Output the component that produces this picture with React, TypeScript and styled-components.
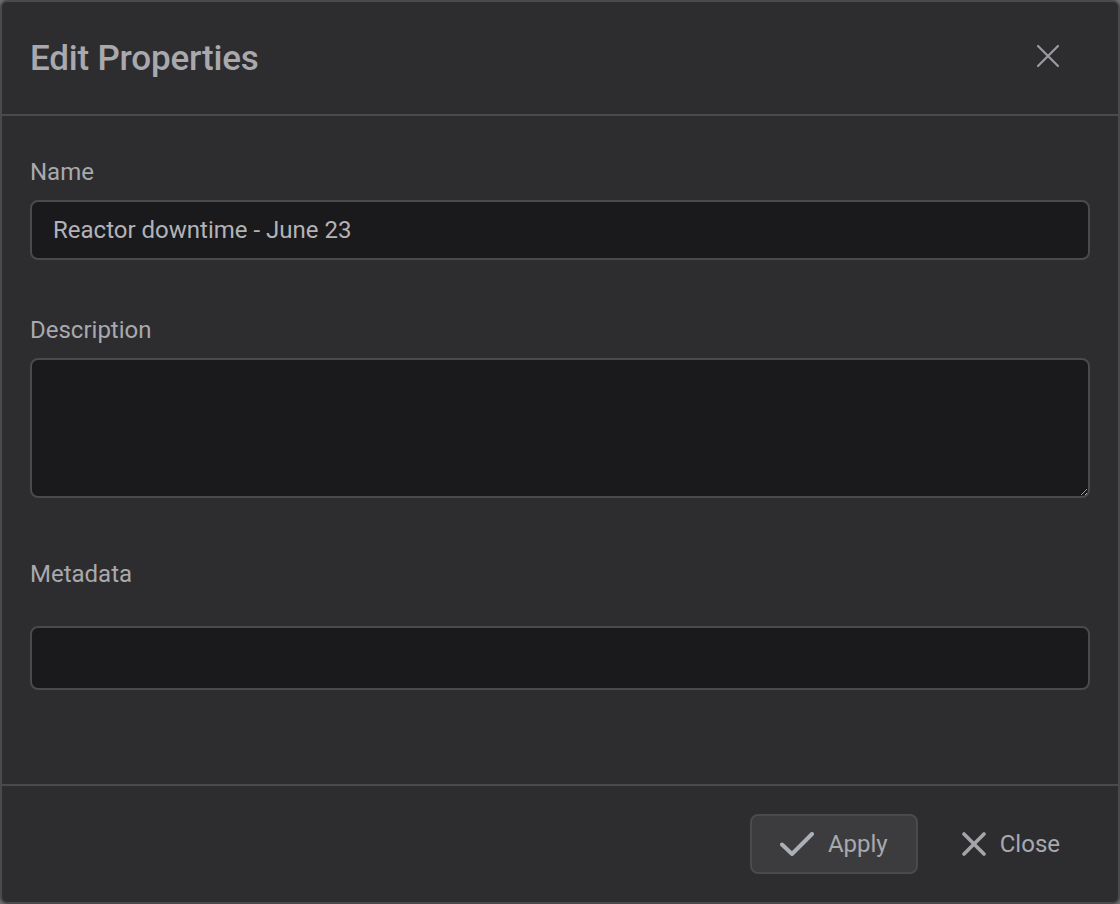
import React from 'react';
import styled, { createGlobalStyle } from 'styled-components';

const GlobalStyle = createGlobalStyle`
  html, body {
    margin: 0;
    padding: 0;
    background: #6a6a6c;
  }
  * {
    box-sizing: border-box;
  }
`;

const Dialog = styled.div`
  width: 1120px;
  height: 904px;
  display: flex;
  flex-direction: column;
  background: #2d2d30;
  border: 2px solid #4a4a4d;
  border-radius: 7px;
  overflow: hidden;
  font-family: Roboto, 'Liberation Sans', sans-serif;
  color: #a9a9ad;
`;

const Header = styled.div`
  height: 114px;
  flex: none;
  display: flex;
  align-items: center;
  justify-content: space-between;
  padding: 0 29px 0 28px;
  border-bottom: 2px solid #4a4a4d;
`;

const Title = styled.h2`
  margin: 1px 0 0;
  font-size: 35px;
  font-weight: 500;
  color: #a9a9ad;
  letter-spacing: -0.2px;
`;

const IconButton = styled.button`
  width: 44px;
  height: 44px;
  margin: 0 19px 5px 0;
  display: flex;
  align-items: center;
  justify-content: center;
  background: transparent;
  border: none;
  padding: 0;
  cursor: pointer;
`;

const Body = styled.div`
  flex: 1;
  padding: 42px 28px 0;
  display: flex;
  flex-direction: column;
  border-bottom: 2px solid #4a4a4d;
`;

const Field = styled.div<{ $gap: number; $after: number }>`
  display: flex;
  flex-direction: column;
  gap: ${(p) => p.$gap}px;
  margin-bottom: ${(p) => p.$after}px;
`;

const Label = styled.label`
  font-size: 24px;
  line-height: 28px;
  color: #a9a9ad;
`;

const TextInput = styled.input<{ $height: number }>`
  width: 100%;
  height: ${(p) => p.$height}px;
  background: #1a1a1c;
  border: 2px solid #4a4a4d;
  border-radius: 8px;
  padding: 0 21px;
  font-family: Roboto, 'Liberation Sans', sans-serif;
  font-size: 24px;
  color: #b3b3b7;
  outline: none;
`;

const TextArea = styled.textarea`
  display: block;
  width: 100%;
  height: 140px;
  background: #1a1a1c;
  border: 2px solid #4a4a4d;
  border-radius: 8px;
  padding: 14px 21px;
  font-family: Roboto, 'Liberation Sans', sans-serif;
  font-size: 24px;
  color: #b3b3b7;
  outline: none;
  resize: vertical;
  color-scheme: dark;
`;

const Footer = styled.div`
  height: 116px;
  flex: none;
  display: flex;
  align-items: center;
  justify-content: flex-end;
  gap: 14px;
  padding: 0 28px;
`;

const ActionButton = styled.button<{ $filled?: boolean }>`
  height: 60px;
  display: flex;
  align-items: center;
  gap: 14px;
  padding: 0 28px;
  border-radius: 8px;
  border: 2px solid ${(p) => (p.$filled ? '#4a4a4d' : 'transparent')};
  background: ${(p) => (p.$filled ? '#3c3c3f' : 'transparent')};
  font-family: Roboto, 'Liberation Sans', sans-serif;
  font-size: 24px;
  color: #a9a9ad;
  cursor: pointer;
`;

const CheckIcon = () => (
  <svg width="34" height="24" viewBox="0 0 34 24" fill="none">
    <path d="M2 12.5 L12 22 L32 2" stroke="#aab0b8" strokeWidth="4" strokeLinecap="round" strokeLinejoin="round" />
  </svg>
);

const CrossIcon = ({ stroke, color }: { stroke: number; color: string }) => (
  <svg width="24" height="24" viewBox="0 0 24 24" fill="none">
    <path d="M2 2 L22 22 M22 2 L2 22" stroke={color} strokeWidth={stroke} strokeLinecap="round" />
  </svg>
);

const App = () => {
  return (
    <>
      <GlobalStyle />
      <Dialog>
        <Header>
          <Title>Edit Properties</Title>
          <IconButton aria-label="Close dialog">
            <CrossIcon stroke={2.2} color="#9c9ca0" />
          </IconButton>
        </Header>
        <Body>
          <Field $gap={14} $after={56}>
            <Label>Name</Label>
            <TextInput $height={60} defaultValue="Reactor downtime - June 23" />
          </Field>
          <Field $gap={14} $after={62}>
            <Label>Description</Label>
            <TextArea />
          </Field>
          <Field $gap={38} $after={0}>
            <Label>Metadata</Label>
            <TextInput $height={64} />
          </Field>
        </Body>
        <Footer>
          <ActionButton $filled>
            <CheckIcon />
            Apply
          </ActionButton>
          <ActionButton>
            <CrossIcon stroke={3.6} color="#a5a5a9" />
            Close
          </ActionButton>
        </Footer>
      </Dialog>
    </>
  );
};

export default App;
